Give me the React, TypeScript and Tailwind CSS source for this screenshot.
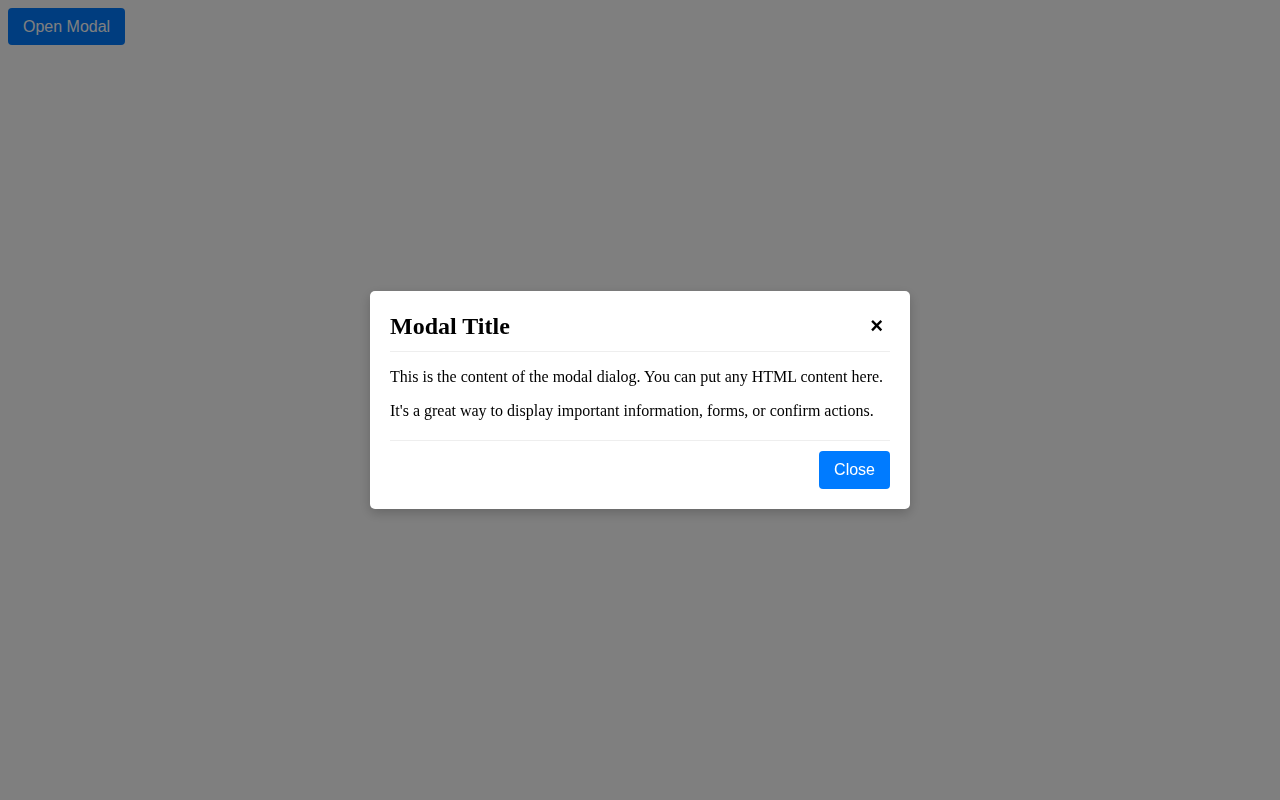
export default function App() {
  return (
    <div className="relative min-h-screen bg-white" style={{ fontFamily: '"Liberation Serif", serif' }}>
      <button
        className="m-2 h-[37px] rounded-[4px] bg-[#007bff] px-[15px] text-[16px] text-white"
        style={{ fontFamily: '"Liberation Sans", Arial, sans-serif' }}
      >
        Open Modal
      </button>

      <div className="fixed inset-0 flex items-center justify-center bg-black/50">
        <div className="w-[540px] rounded-[5px] bg-white p-5 text-black shadow-[0_4px_12px_rgba(0,0,0,0.2)]">
          <div className="flex h-[41px] items-center justify-between border-b border-[#eeeeee] pb-[10px]">
            <h2 className="text-[24px] font-bold leading-[28px]">Modal Title</h2>
            <button
              className="flex h-[30px] items-center px-[7px] text-[22px] font-bold leading-none text-black"
              style={{ fontFamily: '"Liberation Sans", Arial, sans-serif' }}
            >
              ×
            </button>
          </div>

          <div className="pb-[20px] pt-[16px] text-[16px] leading-[18px]">
            <p className="mb-4">This is the content of the modal dialog. You can put any HTML content here.</p>
            <p>It's a great way to display important information, forms, or confirm actions.</p>
          </div>

          <div className="flex justify-end border-t border-[#eeeeee] pt-[10px]">
            <button
              className="h-[38px] rounded-[4px] bg-[#007bff] px-[15px] text-[16px] text-white"
              style={{ fontFamily: '"Liberation Sans", Arial, sans-serif' }}
            >
              Close
            </button>
          </div>
        </div>
      </div>
    </div>
  )
}
